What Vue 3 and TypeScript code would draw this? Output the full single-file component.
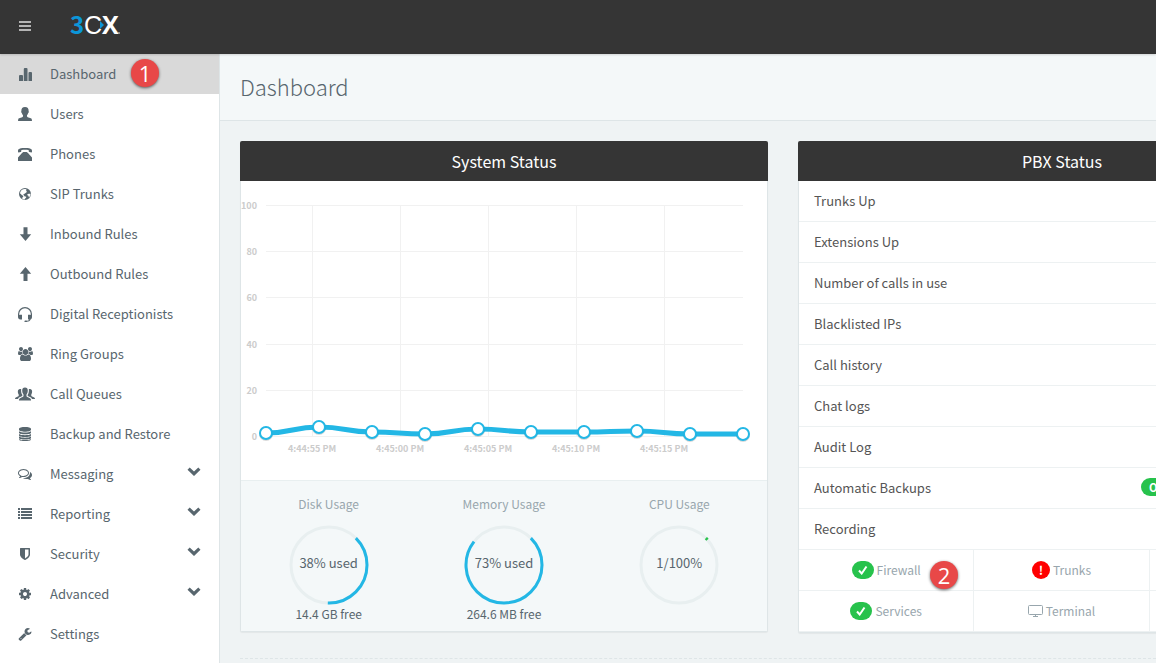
<script setup lang="ts">
interface NavItem {
  label: string
  box: string
  width: number
  path: string
  active?: boolean
  expandable?: boolean
}

const navItems: NavItem[] = [
  { label: 'Dashboard', box: '0 0 16 16', width: 16, active: true, path: 'M2 10q0-1 1-1h2q1 0 1 1v5H2zM6.800 3q0-1 1-1h1.700q1 0 1 1v12H6.800zM11.500 7q0-1 1-1H14q1 0 1 1v8h-3.500z' },
  { label: 'Users', box: '0 0 16 16', width: 16, path: 'M8 1c2.600 0 3.700 1.500 3.600 3.700 0 .5.300.700.200 1.300-.1.700-.500.900-.7 1.300-.3 1-.7 1.500-1.100 2v1.200c.3 1 4.200 1.300 4.700 2.500l.3 2H1l.3-2c.5-1.200 4.400-1.500 4.700-2.500V9.300c-.4-.5-.8-1-1.100-2-.2-.4-.6-.6-.7-1.300-.1-.6.200-.8.200-1.300C4.300 2.500 5.400 1 8 1z' },
  { label: 'Phones', box: '0 0 16 16', width: 16, path: 'M1 4.700C1 2.500 4 2 8 2s7 .5 7 2.700v1.100c0 .4-.2.600-.6.600l-2-.3c-.4-.1-.6-.3-.6-.7V4.200C10 3.700 6 3.700 4.200 4.200v1.200c0 .4-.2.600-.6.700l-2 .3C1.200 6.400 1 6.200 1 5.800zM6.300 6h3.400l1.300 1 4 4.500V15H1v-3.500L5 7z' },
  { label: 'SIP Trunks', box: '0 0 16 16', width: 16, path: 'M8 2a6 6 0 1 1 0 12A6 6 0 0 1 8 2zM5 3.800C3.800 4.800 3.100 6 3 7.500c.8.200 1.400.8 1.600 1.400.8.300 1.500.4 1.700 1 .2.800-.8 1-.9 1.700 0 .5-.2.900-.1 1.200.8.500 1.500.7 2.400.8.200-1 .8-1.500 1.300-1.900.5-.6.100-1-.4-1.100-.6-.1-1.200-.3-1.400-.9-.1-.6-.9-.7-.8-1.300.1-.7.800-.7 1.200-.6.500.1.400-.5.900-.8.600-.4 1.200-.7 1.400-1.300l-.8-1 .4-1.300C7.800 2.600 6.200 3 5 3.800zM11 8c-.8.100-.9.900-.5 1.300.5.500 1 .3 1.100.9 0 .5.200 1 .5 1.100 1-1 1.400-2.100 1.400-3.500C12.600 7.600 11.800 7.700 11 8z' },
  { label: 'Inbound Rules', box: '0 0 16 16', width: 16, path: 'M6.500 1.300h4v7h3.700L8.500 15 2.800 8.300h3.700z' },
  { label: 'Outbound Rules', box: '0 0 16 16', width: 16, path: 'M6.500 15h4V7.700h3.700L8.500 1 2.800 7.700h3.700z' },
  { label: 'Digital Receptionists', box: '0 0 16 16', width: 16, path: 'M1 8a7 7 0 0 1 14 0v3c0 1.200-.4 2-1.400 2.400-.6 1.500-2 2.200-3.600 2.300-.3.300-.7.500-1.300.5-.8 0-1.300-.4-1.300-.9s.5-.9 1.300-.9c.6 0 1 .1 1.300.4 1.100-.1 1.900-.5 2.400-1.300H11V8.700h1.600c.5 0 .9.100 1.200.4V8A5.800 5.800 0 0 0 2.200 8v1.100c.3-.3.700-.4 1.200-.4H5v4.800H3.400C2 13.500 1 12.500 1 11z' },
  { label: 'Ring Groups', box: '0 0 1920 1792', width: 15, path: 'M593 896q-162 5-265 128h-134q-82 0-138-40.5t-56-118.5q0-353 124-353 6 0 43.500 21t97.500 42.500 119 21.500q67 0 133-23-5 37-5 66 0 139 81 256zm1071 637q0 120-73 189.500t-194 69.500h-874q-121 0-194-69.500t-73-189.500q0-53 3.500-103.500t14-109 26.500-108.500 43-97.500 62-81 85.500-53.500 111.500-20q10 0 43 21.500t73 48 107 48 135 21.500 135-21.500 107-48 73-48 43-21.500q61 0 111.500 20t85.500 53.500 62 81 43 97.500 26.500 108.500 14 109 3.500 103.500zm-1024-1277q0 106-75 181t-181 75-181-75-75-181 75-181 181-75 181 75 75 181zm704 384q0 159-112.500 271.500t-271.500 112.500-271.500-112.500-112.500-271.500 112.500-271.500 271.500-112.500 271.500 112.500 112.500 271.500zm576 225q0 78-56 118.500t-138 40.500h-134q-103-123-265-128 81-117 81-256 0-29-5-66 66 23 133 23 59 0 119-21.500t97.500-42.500 43.500-21q124 0 124 353zm-128-609q0 106-75 181t-181 75-181-75-75-181 75-181 181-75 181 75 75 181z' },
  { label: 'Call Queues', box: '0 0 20 16', width: 20, path: 'M10 1.500c1.900 0 2.800 1.200 2.800 3 0 1.500-.4 3-1.300 3.900v1.900c.5 1 3.700 1.400 4.300 2.800l.3 1.400H3.900l.3-1.400c.6-1.400 3.800-1.800 4.300-2.800V8.400C7.600 7.500 7.200 6 7.200 4.500c0-1.800.9-3 2.800-3zM5 3c.5 0 .9.100 1.200.300-.3 2.200.1 4.200 1.100 5.500v1.100L4 11.600 2.900 13H0l.2-1c.4-.9 2.800-1.200 3.500-2V8.500C2.500 7 2.300 3 5 3zM15 3c2.700 0 2.500 4 1.300 5.500V10c.7.800 3.100 1.100 3.500 2l.2 1h-2.900L16 11.600l-3.300-1.700V8.800c1-1.300 1.400-3.300 1.100-5.500.3-.2.700-.3 1.200-.3z' },
  { label: 'Backup and Restore', box: '0 0 16 16', width: 16, path: 'M2 3c0-2.600 12-2.600 12 0v.8c0 2.600-12 2.600-12 0zM2 5.300c2 1.600 10 1.600 12 0v1.500c0 2-12 2-12 0zM2 8c2 1.600 10 1.600 12 0v1.500c0 2-12 2-12 0zM2 10.600c2 1.600 10 1.600 12 0v1.300c0 2-12 2-12 0zM2 12.900c2 1.600 10 1.600 12 0v.6c0 2-12 2-12 0z' },
  { label: 'Messaging', box: '0 0 1792 1792', width: 14, expandable: true, path: 'M704 384q-153 0-286 52t-211.500 141-78.500 191q0 82 53 158t149 132l97 56-35 84q34-20 62-39l44-31 53 10q78 14 153 14 153 0 286-52t211.500-141 78.500-191-78.500-191-211.500-141-286-52zm0-128q191 0 353.500 68.500t256.500 186.500 94 257-94 257-256.500 186.500-353.500 68.500q-86 0-176-16-124 88-278 128-36 9-86 16h-3q-11 0-20.500-8t-11.500-21q-1-3-1-6.500t.5-6.500 2-6l2.500-5 3.500-5.500 4-5 4.500-5 4-4.500q5-6 23-25t26-29.500 22.500-29 25-38.500 20.500-44q-124-72-195-177t-71-224q0-139 94-257t256.500-186.500 353.500-68.500zm822 1169q10 24 20.500 44t25 38.500 22.500 29 26 29.500 23 25q1 1 4 4.500t4.500 5 4 5 3.500 5.500l2.500 5 2 6 .5 6.500-1 6.500q-3 14-13 22t-22 7q-50-7-86-16-154-40-278-128-90 16-176 16-271 0-472-132 58 4 88 4 161 0 309-45t264-129q125-92 192-212t67-254q0-77-23-152 129 71 204 178t75 230q0 120-71 224.500t-195 176.500z' },
  { label: 'Reporting', box: '0 0 16 16', width: 16, expandable: true, path: 'M1 2h2v2H1zm3 0h11v2H4zM1 5h2v2H1zm3 0h11v2H4zM1 8h2v2H1zm3 0h11v2H4zM1 11h2v2H1zm3 0h11v2H4z' },
  { label: 'Security', box: '0 0 1792 1792', width: 14, expandable: true, path: 'M1344 960v-640h-448v1137q119-63 213-137 235-184 235-360zm192-768v768q0 86-33.500 170.500t-83 150-118 127.500-126.500 103-121 77.500-89.500 49.500-42.500 20q-12 6-26 6t-26-6q-16-7-42.500-20t-89.500-49.500-121-77.500-126.500-103-118-127.500-83-150-33.500-170.500v-768q0-26 19-45t45-19h1152q26 0 45 19t19 45z' },
  { label: 'Advanced', box: '0 0 1792 1792', width: 14, expandable: true, path: 'M1152 896q0-106-75-181t-181-75-181 75-75 181 75 181 181 75 181-75 75-181zm512-109v222q0 12-8 23t-20 13l-185 28q-19 54-39 91 35 50 107 138 10 12 10 25t-9 23q-27 37-99 108t-94 71q-12 0-26-9l-138-108q-44 23-91 38-16 136-29 186-7 28-36 28h-222q-14 0-24.500-8.500t-11.500-21.500l-28-184q-49-16-90-37l-141 107q-10 9-25 9-14 0-25-11-126-114-165-168-7-10-7-23 0-12 8-23 15-21 51-66.500t54-70.500q-27-50-41-99l-183-27q-13-2-21-12.500t-8-23.500v-222q0-12 8-23t19-13l186-28q14-46 39-92-40-57-107-138-10-12-10-24 0-10 9-23 26-36 98.500-107.500t94.500-71.500q13 0 26 10l138 107q44-23 91-38 16-136 29-186 7-28 36-28h222q14 0 24.500 8.500t11.500 21.500l28 184q49 16 90 37l142-107q9-9 24-9 13 0 25 10 129 119 165 170 7 8 7 22 0 12-8 23-15 21-51 66.500t-54 70.500q26 50 41 98l183 28q13 2 21 12.500t8 23.500z' },
  { label: 'Settings', box: '0 0 1792 1792', width: 14, path: 'M448 1472q0-26-19-45t-45-19-45 19-19 45 19 45 45 19 45-19 19-45zm644-420l-682 682q-37 37-90 37-52 0-91-37l-106-108q-38-36-38-90 0-53 38-91l681-681q39 98 114.500 173.500t173.500 114.500zm634-435q0 39-23 106-47 134-164.500 217.500t-258.500 83.500q-185 0-316.500-131.500t-131.500-316.500 131.500-316.500 316.500-131.500q58 0 121.500 16.500t107.500 46.500q16 11 16 28t-16 28l-293 169v224l193 107q5-3 79-48.500t135.500-81 70.500-35.500q15 0 23.500 10t8.500 25z' },
]

const yTicks = [
  { value: 100, y: 24 },
  { value: 80, y: 70 },
  { value: 60, y: 116 },
  { value: 40, y: 163 },
  { value: 20, y: 209 },
  { value: 0, y: 255 },
]

const xTicks = [
  { label: '4:44:55 PM', x: 71 },
  { label: '4:45:00 PM', x: 159 },
  { label: '4:45:05 PM', x: 247 },
  { label: '4:45:10 PM', x: 335 },
  { label: '4:45:15 PM', x: 423 },
]

const samples = [252, 246, 251, 253, 248, 251, 251, 250, 253, 253].map((y, i) => ({ x: 25 + i * 53, y }))

const curve = samples
  .map((p, i) => {
    if (i === 0) return `M${p.x} ${p.y}`
    const prev = samples[i - 1]
    const mid = (prev.x + p.x) / 2
    return `C${mid} ${prev.y} ${mid} ${p.y} ${p.x} ${p.y}`
  })
  .join('')

const gauges = [
  { title: 'Disk Usage', text: '38% used', note: '14.4 GB free', percent: 38, color: '#23b7e5' },
  { title: 'Memory Usage', text: '73% used', note: '264.6 MB free', percent: 73, color: '#23b7e5' },
  { title: 'CPU Usage', text: '1/100%', note: '', percent: 1, color: '#27c24c' },
]

const pbxRows = [
  'Trunks Up',
  'Extensions Up',
  'Number of calls in use',
  'Blacklisted IPs',
  'Call history',
  'Chat logs',
  'Audit Log',
  'Automatic Backups',
  'Recording',
]
</script>

<template>
  <div class="app">
    <header class="topbar">
      <button class="menu-button" type="button" aria-label="Toggle menu">
        <svg width="12" height="12" viewBox="0 0 12 12"><path d="M0 0h12v2H0zM0 4h12v2H0zM0 8h12v2H0z" fill="#b4b4b4" /></svg>
      </button>
      <a class="logo" href="#" aria-label="3CX">
        <svg width="56" height="44" viewBox="0 0 56 44">
          <text class="logo-three" x="0" y="29">3</text>
          <text class="logo-c" x="14" y="29">C</text>
          <text class="logo-x" x="32" y="29">X</text>
          <path d="M30 16l4 4-4 4z" fill="#0b96d9" />
          <circle cx="49" cy="28" r="1" fill="#aaa" />
        </svg>
      </a>
    </header>

    <div class="body">
      <nav class="sidebar">
        <a v-for="item in navItems" :key="item.label" href="#" class="nav-item" :class="{ active: item.active }">
          <span class="nav-icon">
            <svg :width="item.width" :height="item.width === 16 || item.width === 20 ? 16 : 14" :viewBox="item.box">
              <path :d="item.path" fill="currentColor" fill-rule="evenodd" />
            </svg>
          </span>
          <span class="nav-label">{{ item.label }}</span>
          <svg v-if="item.expandable" class="chevron" width="14" height="10" viewBox="0 0 14 10">
            <path d="M2.700.500L7 4.600 11.300.500 13.500 2.700 7 9 .500 2.700z" fill="currentColor" />
          </svg>
          <span v-if="item.active" class="callout callout-nav">1</span>
        </a>
      </nav>

      <main class="main">
        <div class="page-head"><h1>Dashboard</h1></div>

        <div class="content">
          <div class="cards">
            <section class="card">
              <h2>System Status</h2>
              <svg class="chart" viewBox="0 0 526 299" role="img" aria-label="System load">
                <g stroke="#f1f1f1" stroke-width="1" shape-rendering="crispEdges">
                  <line v-for="t in yTicks" :key="t.value" x1="25" x2="502" :y1="t.y + 0.5" :y2="t.y + 0.5" />
                  <line v-for="t in xTicks" :key="t.label" y1="24" y2="255" :x1="t.x + 0.5" :x2="t.x + 0.5" />
                </g>
                <g class="tick">
                  <text v-for="t in yTicks" :key="t.value" x="16" :y="t.y + 4" text-anchor="end">{{ t.value }}</text>
                  <text v-for="t in xTicks" :key="t.label" :x="t.x" y="271" text-anchor="middle">{{ t.label }}</text>
                </g>
                <path :d="curve" fill="none" stroke="#23b7e5" stroke-width="5" />
                <g v-for="p in samples" :key="p.x">
                  <circle :cx="p.x" :cy="p.y + 1" r="7" fill="#000" opacity=".15" />
                  <circle :cx="p.x" :cy="p.y" r="6" fill="#fff" stroke="#23b7e5" stroke-width="2" />
                </g>
              </svg>
              <div class="gauges">
                <div v-for="g in gauges" :key="g.title" class="gauge">
                  <span class="gauge-title">{{ g.title }}</span>
                  <div class="ring">
                    <svg width="80" height="80" viewBox="0 0 80 80">
                      <circle cx="40" cy="40" r="38" fill="none" stroke="#e8eff0" stroke-width="3" />
                      <circle cx="40" cy="40" r="38" fill="none" :stroke="g.color" stroke-width="3" pathLength="100" :stroke-dasharray="`${g.percent} 100`" transform="rotate(-45 40 40)" />
                    </svg>
                    <span>{{ g.text }}</span>
                  </div>
                  <span class="gauge-note">{{ g.note }}</span>
                </div>
              </div>
            </section>

            <section class="card">
              <h2>PBX Status</h2>
              <ul class="rows">
                <li v-for="row in pbxRows" :key="row">
                  <span>{{ row }}</span>
                  <span v-if="row === 'Automatic Backups'" class="row-badge">O</span>
                </li>
              </ul>
              <div class="links">
                <a href="#" class="link">
                  <span class="pill ok"><svg width="10" height="10" viewBox="0 0 10 10"><path d="M1 5.500l2.700 3L8.500 1.500" fill="none" stroke="#fff" stroke-width="2" /></svg></span>
                  <span>Firewall</span>
                  <span class="callout callout-link">2</span>
                </a>
                <a href="#" class="link">
                  <span class="pill alert">!</span>
                  <span>Trunks</span>
                </a>
                <span class="link"></span>
                <a href="#" class="link">
                  <span class="pill ok"><svg width="10" height="10" viewBox="0 0 10 10"><path d="M1 5.500l2.700 3L8.500 1.500" fill="none" stroke="#fff" stroke-width="2" /></svg></span>
                  <span>Services</span>
                </a>
                <a href="#" class="link">
                  <svg width="15" height="12" viewBox="0 0 15 12"><path d="M1.500.5h12q1 0 1 1v7q0 1-1 1h-12q-1 0-1-1v-7q0-1 1-1zM5 11.500h5M7.500 9.500v2" fill="none" stroke="currentColor" /></svg>
                  <span>Terminal</span>
                </a>
                <span class="link"></span>
              </div>
            </section>
          </div>
          <hr class="divider" />
        </div>
      </main>
    </div>
  </div>
</template>

<style>
html,
body {
  margin: 0;
  background: #eff3f4;
}
body {
  overflow: hidden;
}
</style>

<style scoped>
.app {
  display: flex;
  flex-direction: column;
  min-height: 100vh;
  font-family: "Noto Sans CJK SC", "Open Sans", sans-serif;
  font-size: 13px;
  line-height: 20px;
  color: #58666e;
}
.app * {
  box-sizing: border-box;
}
a {
  color: inherit;
  text-decoration: none;
}
.topbar {
  position: relative;
  z-index: 1;
  display: flex;
  align-items: center;
  gap: 32px;
  height: 54px;
  padding: 0 12px;
  background: #353535;
  box-shadow: 0 1px 2px rgba(0, 0, 0, 0.15);
}
.menu-button {
  display: flex;
  justify-content: center;
  align-items: center;
  width: 26px;
  height: 32px;
  padding: 0;
  border: 0;
  background: none;
}
.logo svg {
  display: block;
}
.logo-three {
  fill: #0b96d9;
  font-size: 24px;
  font-weight: 700;
}
.logo-c {
  fill: #fff;
  font-family: "Liberation Sans", sans-serif;
  font-size: 25px;
}
.logo-x {
  fill: #fff;
  font-family: "Open Sans", sans-serif;
  font-size: 25px;
  font-weight: 700;
}
.body {
  display: flex;
  flex: 1;
}
.sidebar {
  flex: none;
  width: 220px;
  background: #fff;
  border-right: 1px solid #dee5e7;
}
.nav-item {
  position: relative;
  display: flex;
  align-items: center;
  height: 40px;
}
.nav-item.active {
  background: #d9d9d9;
}
.nav-icon {
  display: flex;
  justify-content: center;
  width: 50px;
}
.nav-label {
  flex: 1;
}
.chevron {
  margin: 0 18px 4px 0;
}
.callout {
  position: absolute;
  width: 28px;
  height: 28px;
  border-radius: 50%;
  background: #e84848;
  box-shadow: 0 1px 3px rgba(0, 0, 0, 0.6);
  color: #fff;
  font: 22px/28px "Open Sans", sans-serif;
  text-align: center;
}
.callout-nav {
  left: 131px;
  top: 5px;
}
.callout-link {
  left: 131px;
  top: 11px;
}
.main {
  flex: 1;
  min-width: 0;
  overflow: hidden;
}
.page-head {
  padding: 14px 20px 16px;
  background: #f4f8f9;
  border-bottom: 1px solid #dee5e7;
}
h1 {
  margin: 0;
  font-size: 22px;
  line-height: 36px;
  font-weight: 300;
}
.content {
  padding: 20px;
}
.cards {
  display: grid;
  grid-template-columns: repeat(2, minmax(528px, 1fr));
  gap: 30px;
  align-items: start;
}
.card {
  border: 1px solid #dee5e7;
  border-top: 0;
  border-radius: 2px;
  background: #fff;
  box-shadow: 0 1px 1px rgba(0, 0, 0, 0.05);
}
h2 {
  margin: 0 -1px;
  border-radius: 2px 2px 0 0;
  background: #353535;
  color: #fff;
  font-size: 16px;
  line-height: 40px;
  font-weight: 400;
  text-align: center;
}
.chart {
  display: block;
  width: 100%;
}
.tick {
  fill: #ccc;
  font-size: 9px;
  font-weight: 700;
}
.gauges {
  display: grid;
  grid-template-columns: repeat(3, 1fr);
  padding: 14px 0 8px;
  border-top: 1px solid #e8eff0;
  background: #f4f8f9;
}
.gauge {
  display: flex;
  flex-direction: column;
  align-items: center;
  font-size: 12px;
  line-height: 18px;
}
.gauge-title {
  margin-bottom: 12px;
  color: #98a6ad;
}
.ring {
  display: grid;
  place-items: center;
  font-size: 13px;
}
.ring > * {
  grid-area: 1 / 1;
}
.ring span {
  padding-bottom: 4px;
}
.rows {
  margin: 0;
  padding: 0;
  list-style: none;
  color: #555;
}
.rows li {
  display: flex;
  justify-content: space-between;
  padding: 10px 15px;
  border-bottom: 1px solid #edf1f2;
}
.row-badge {
  width: 169px;
  height: 18px;
  padding: 0 8px;
  border-radius: 9px;
  background: #27c24c;
  color: #fff;
  font-size: 11px;
  line-height: 18px;
  font-weight: 700;
}
.links {
  display: grid;
  grid-template-columns: repeat(3, 1fr);
}
.link {
  position: relative;
  display: flex;
  justify-content: center;
  align-items: center;
  gap: 3px;
  height: 41px;
  border-right: 1px solid #edf1f2;
  border-bottom: 1px solid #edf1f2;
  color: #98a6ad;
  font-size: 12px;
}
.pill {
  display: flex;
  justify-content: center;
  align-items: center;
  width: 22px;
  height: 18px;
  border-radius: 9px;
  color: #fff;
  font-weight: 700;
}
.ok {
  background: #27c24c;
}
.alert {
  width: 18px;
  background: #f00;
}
.divider {
  margin: 25px -20px 0 0;
  border: 0;
  border-top: 1px dashed #dee5e7;
}
</style>
